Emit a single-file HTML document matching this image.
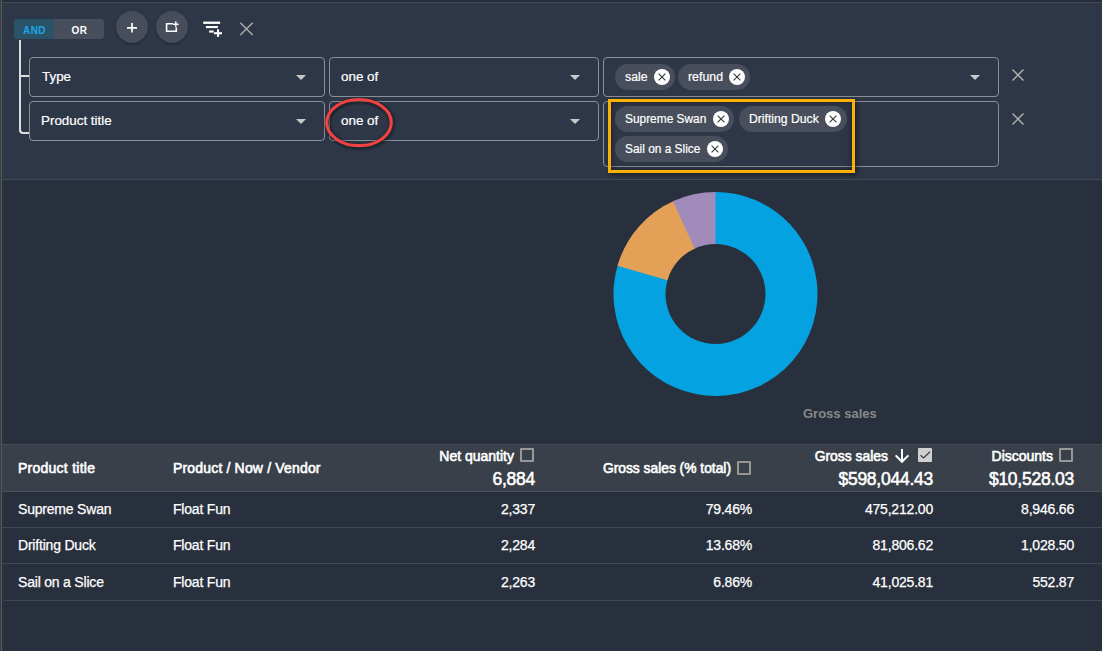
<!DOCTYPE html>
<html><head><meta charset="utf-8">
<style>
*{margin:0;padding:0;box-sizing:border-box}
html,body{width:1102px;height:651px;overflow:hidden;background:#29303d;font-family:"Liberation Sans",sans-serif;color:#fff;position:relative}
.a{position:absolute}
#edge0{left:0;top:0;width:1px;height:651px;background:#3b3b3b}
#edge1{left:1px;top:0;width:1px;height:651px;background:#555a63}
#top0{left:2px;top:0;width:1100px;height:2px;background:#262c39}
#top1{left:2px;top:2px;width:1100px;height:1px;background:#444a55}
#panel{left:2px;top:3px;width:1100px;height:176px;background:#2e3747}
#panelline{left:2px;top:179px;width:1100px;height:1px;background:#434955}
.tog{left:14px;top:19px;width:90px;height:20px;border-radius:3px;overflow:hidden;background:#484e5c;font-weight:bold;font-size:10px;letter-spacing:0.5px}
.tog .and{position:absolute;left:0;top:0;width:40px;height:20px;background:#2a5368;color:#1ea5e6;text-align:center;line-height:23px;padding-left:1px}
.tog .or{position:absolute;left:40px;top:0;width:50px;height:20px;color:#fff;text-align:center;line-height:23px;padding-left:1px}
.circ{width:32px;height:32px;border-radius:50%;background:#474d5b;box-shadow:0 1px 2px rgba(0,0,0,.35)}
.tree{background:#dcdcdc}
.dd{border:1px solid #8b8f97;border-radius:4px}
.ddt{font-size:13.4px;color:#fff;white-space:nowrap;-webkit-text-stroke:0.2px #fff}
.arr{width:0;height:0;border-left:5px solid transparent;border-right:5px solid transparent;border-top:5px solid #c8c8c8}
.chip{height:26px;border-radius:13px;background:#484e5b;font-size:12.2px;white-space:nowrap}
.chip span{position:absolute;left:10px;top:0;line-height:26px;-webkit-text-stroke:0.2px #fff}
.chip svg{position:absolute;top:5px}
.xx{width:12px;height:12px}
.hdr{left:2px;top:444px;width:1100px;height:47px;background:#39404a;border-top:1px solid #464c56}
.hline{left:2px;width:1100px;height:1px;background:#424854}
.th{font-weight:normal;font-size:14px;white-space:nowrap;-webkit-text-stroke:0.6px #fff}
.tot{font-weight:normal;font-size:17.5px;letter-spacing:-0.25px;white-space:nowrap;-webkit-text-stroke:0.55px #fff}
.td{font-size:14px;letter-spacing:-0.2px;white-space:nowrap;-webkit-text-stroke:0.25px #fff}
.r{text-align:right}
.cb{width:14px;height:14px;border:2px solid #989898;border-radius:1px}
</style></head><body>
<div class="a" id="edge0"></div><div class="a" id="edge1"></div>
<div class="a" id="top0"></div><div class="a" id="top1"></div>
<div class="a" id="panel"></div><div class="a" id="panelline"></div>

<!-- toolbar -->
<div class="a tog"><div class="and">AND</div><div class="or">OR</div></div>
<div class="a circ" style="left:116px;top:11px"></div>
<svg class="a" style="left:116px;top:11px" width="32" height="32" viewBox="0 0 32 32"><path d="M11 16.8H21M16 11.9V21.5" stroke="#fff" stroke-width="1.7"/></svg>
<div class="a circ" style="left:156px;top:11px"></div>
<svg class="a" style="left:156px;top:11px" width="32" height="32" viewBox="0 0 32 32"><path d="M16.8 12.7H10.6V20.3H20.3V16.6" stroke="#fff" stroke-width="1.6" fill="none"/><path d="M17 13.3H22.6M19.8 10.3V16" stroke="#fff" stroke-width="1.4"/></svg>
<svg class="a" style="left:200px;top:18px" width="26" height="22" viewBox="0 0 26 22"><rect x="3.2" y="3.6" width="16.9" height="2.3" fill="#fff"/><rect x="5.9" y="8" width="12" height="2.1" fill="#fff"/><rect x="9.1" y="12.5" width="4.6" height="2.1" fill="#fff"/><rect x="14" y="14.2" width="8" height="2.1" fill="#fff"/><rect x="17" y="11.3" width="2.1" height="7.6" fill="#fff"/></svg>
<svg class="a" style="left:238px;top:21px" width="17" height="16" viewBox="0 0 17 16"><path d="M2.3 1.8L14.7 14M14.7 1.8L2.3 14" stroke="#a8a8a8" stroke-width="1.6"/></svg>

<!-- tree -->
<div class="a tree" style="left:19px;top:40px;width:2px;height:91px"></div>
<div class="a" style="left:19px;top:128px;width:10px;height:6px;border-left:2px solid #dcdcdc;border-bottom:2px solid #dcdcdc;border-bottom-left-radius:4px"></div>
<div class="a tree" style="left:21px;top:75px;width:8px;height:2px"></div>

<!-- row 1 -->
<div class="a dd" style="left:29px;top:57px;width:296px;height:40px"></div>
<div class="a ddt" style="left:42px;top:69px">Type</div>
<div class="a arr" style="left:296px;top:75px"></div>
<div class="a dd" style="left:329px;top:57px;width:270px;height:40px"></div>
<div class="a ddt" style="left:341px;top:69px">one of</div>
<div class="a arr" style="left:570px;top:75px"></div>
<div class="a dd" style="left:603px;top:57px;width:396px;height:40px"></div>
<div class="a chip" style="left:615px;top:64px;width:60px"><span style="font-size:12.3px">sale</span><svg style="left:39px" width="16" height="16" viewBox="0 0 16 16"><circle cx="8" cy="8" r="8" fill="#fff"/><path d="M4.6 4.6L11.4 11.4M11.4 4.6L4.6 11.4" stroke="#353b48" stroke-width="1.15"/></svg></div>
<div class="a chip" style="left:678px;top:64px;width:72px"><span style="font-size:12.35px">refund</span><svg style="left:51px" width="16" height="16" viewBox="0 0 16 16"><circle cx="8" cy="8" r="8" fill="#fff"/><path d="M4.6 4.6L11.4 11.4M11.4 4.6L4.6 11.4" stroke="#353b48" stroke-width="1.15"/></svg></div>
<div class="a arr" style="left:970px;top:75px"></div>
<svg class="a xx" style="left:1012px;top:69px" viewBox="0 0 12 12"><path d="M0.5 0.5L11.5 11.5M11.5 0.5L0.5 11.5" stroke="#b4b2ae" stroke-width="1.4"/></svg>

<!-- row 2 -->
<div class="a dd" style="left:29px;top:101px;width:296px;height:40px"></div>
<div class="a ddt" style="left:41px;top:113px">Product title</div>
<div class="a arr" style="left:296px;top:119px"></div>
<div class="a dd" style="left:329px;top:101px;width:270px;height:40px"></div>
<div class="a ddt" style="left:341px;top:113px">one of</div>
<div class="a arr" style="left:570px;top:119px"></div>
<div class="a dd" style="left:603px;top:101px;width:396px;height:66px"></div>
<div class="a" style="left:608px;top:99px;width:247px;height:74px;border:3px solid #fbb204;box-shadow:inset 0 0 6px rgba(0,0,0,.45),2px 2px 5px rgba(0,0,0,.45)"></div>
<div class="a chip" style="left:615px;top:106px;width:119px"><span style="font-size:11.9px">Supreme Swan</span><svg style="left:98px" width="16" height="16" viewBox="0 0 16 16"><circle cx="8" cy="8" r="8" fill="#fff"/><path d="M4.6 4.6L11.4 11.4M11.4 4.6L4.6 11.4" stroke="#353b48" stroke-width="1.15"/></svg></div>
<div class="a chip" style="left:739px;top:106px;width:108px"><span style="font-size:12.2px">Drifting Duck</span><svg style="left:86px" width="16" height="16" viewBox="0 0 16 16"><circle cx="8" cy="8" r="8" fill="#fff"/><path d="M4.6 4.6L11.4 11.4M11.4 4.6L4.6 11.4" stroke="#353b48" stroke-width="1.15"/></svg></div>
<div class="a chip" style="left:615px;top:136px;width:113px"><span style="font-size:11.9px">Sail on a Slice</span><svg style="left:92px" width="16" height="16" viewBox="0 0 16 16"><circle cx="8" cy="8" r="8" fill="#fff"/><path d="M4.6 4.6L11.4 11.4M11.4 4.6L4.6 11.4" stroke="#353b48" stroke-width="1.15"/></svg></div>
<svg class="a xx" style="left:1012px;top:113px" viewBox="0 0 12 12"><path d="M0.5 0.5L11.5 11.5M11.5 0.5L0.5 11.5" stroke="#b4b2ae" stroke-width="1.4"/></svg>
<svg class="a" style="left:318px;top:92px" width="84" height="60" viewBox="0 0 84 60"><defs><filter id="sh" x="-20%" y="-20%" width="140%" height="140%"><feGaussianBlur stdDeviation="1.6"/></filter></defs><ellipse cx="41.8" cy="31.6" rx="32.3" ry="23.1" fill="none" stroke="rgba(10,14,22,.7)" stroke-width="4.5" filter="url(#sh)"/><ellipse cx="41" cy="30.6" rx="32.3" ry="23.1" fill="none" stroke="#f04242" stroke-width="3.2"/></svg>

<!-- chart -->
<svg class="a" style="left:605px;top:184px" width="220" height="220" viewBox="0 0 220 220" id="donut"><path d="M108.46 8.02A102 102 0 1 1 13.06 79.83L62.74 95.21A50 50 0 1 0 109.50 60.01Z" fill="#04a2e0"/><path d="M12.48 81.79A102 102 0 0 1 69.75 16.50L90.52 64.16A50 50 0 0 0 62.45 96.17Z" fill="#e4a056"/><path d="M67.88 17.33A102 102 0 0 1 110.50 8.00L110.50 60.00A50 50 0 0 0 89.61 64.57Z" fill="#a08bba"/></svg>
<div class="a" style="left:803px;top:406px;font-weight:bold;font-size:13px;color:#888;white-space:nowrap">Gross sales</div>

<!-- table -->
<div class="a hdr"></div>
<div class="a hline" style="top:491px;background:#4b515b"></div>
<div class="a th" style="left:18px;top:460px;letter-spacing:0.25px">Product title</div>
<div class="a th" style="left:173px;top:460px;letter-spacing:0.17px">Product / Now / Vendor</div>

<div class="a th r" style="left:400px;width:114px;top:448px">Net quantity</div>
<div class="a cb" style="left:520px;top:448px"></div>
<div class="a tot r" style="left:400px;width:135px;top:469px">6,884</div>

<div class="a th r" style="left:580px;width:151px;top:461px;font-size:13.8px">Gross sales (% total)</div>
<div class="a cb" style="left:737px;top:461px"></div>

<div class="a th r" style="left:780px;width:108px;top:448px;font-size:13.9px">Gross sales</div>
<svg class="a" style="left:892px;top:447px" width="20" height="18" viewBox="0 0 20 18"><path d="M10 2V14.8M3.6 8.4L10 14.8L16.4 8.4" stroke="#fff" stroke-width="2" fill="none"/></svg>
<div class="a" style="left:918px;top:448px;width:14px;height:14px;background:#d0d0d0;border-radius:1px"></div>
<svg class="a" style="left:918px;top:448px" width="14" height="14" viewBox="0 0 14 14"><path d="M2.5 7.2L5.6 10L12 3.7" stroke="#353b48" stroke-width="1.2" fill="none"/></svg>
<div class="a tot r" style="left:780px;width:153px;top:469px">$598,044.43</div>

<div class="a th r" style="left:940px;width:113px;top:448px">Discounts</div>
<div class="a cb" style="left:1059px;top:448px"></div>
<div class="a tot r" style="left:940px;width:134px;top:469px">$10,528.03</div>

<div class="a hline" style="top:527px"></div>
<div class="a hline" style="top:563px"></div>
<div class="a hline" style="top:600px;left:4px"></div>

<div class="a td" style="left:18px;top:501px">Supreme Swan</div>
<div class="a td" style="left:173px;top:501px">Float Fun</div>
<div class="a td r" style="left:400px;width:135px;top:501px">2,337</div>
<div class="a td r" style="left:600px;width:152px;top:501px">79.46%</div>
<div class="a td r" style="left:780px;width:153px;top:501px">475,212.00</div>
<div class="a td r" style="left:940px;width:134px;top:501px">8,946.66</div>

<div class="a td" style="left:18px;top:537px">Drifting Duck</div>
<div class="a td" style="left:173px;top:537px">Float Fun</div>
<div class="a td r" style="left:400px;width:135px;top:537px">2,284</div>
<div class="a td r" style="left:600px;width:152px;top:537px">13.68%</div>
<div class="a td r" style="left:780px;width:153px;top:537px">81,806.62</div>
<div class="a td r" style="left:940px;width:134px;top:537px">1,028.50</div>

<div class="a td" style="left:18px;top:574px">Sail on a Slice</div>
<div class="a td" style="left:173px;top:574px">Float Fun</div>
<div class="a td r" style="left:400px;width:135px;top:574px">2,263</div>
<div class="a td r" style="left:600px;width:152px;top:574px">6.86%</div>
<div class="a td r" style="left:780px;width:153px;top:574px">41,025.81</div>
<div class="a td r" style="left:940px;width:134px;top:574px">552.87</div>
</body></html>
